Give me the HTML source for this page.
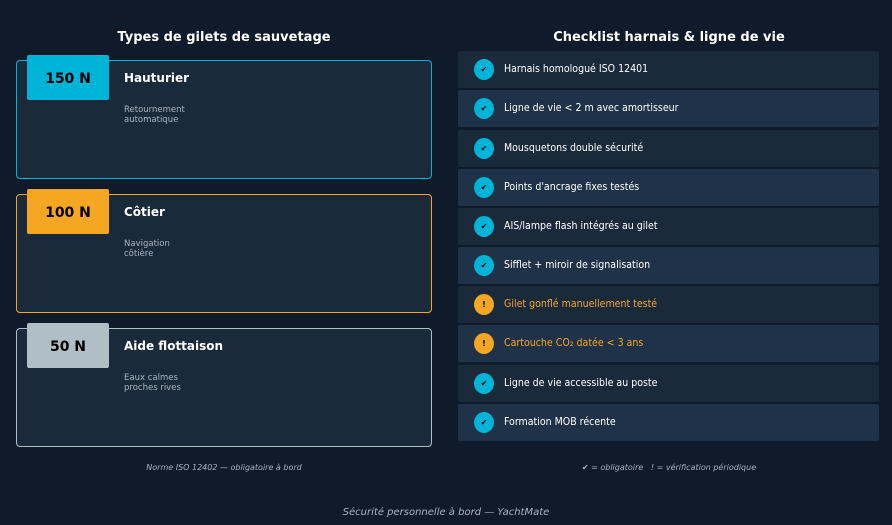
<!DOCTYPE html><html><head><style>
body{margin:0;width:892px;height:525px;background:#0f1a2a;font-family:"DejaVu Sans","Liberation Sans",sans-serif;position:relative;overflow:hidden}
h2{position:absolute;margin:0;font-size:13px;color:#fff;font-weight:bold;text-align:center}
.card{position:absolute;left:16px;width:414px;height:117px;border:1.5px solid;border-radius:4px;background:#1b2a3b}
.badge{position:absolute;left:27px;width:82px;height:45px;border-radius:2px;font-weight:bold;font-size:14px;line-height:48px;text-align:center;color:#000}
.t{position:absolute;left:124px;font-size:12px;font-weight:bold;color:#fff}
.d{position:absolute;left:124px;font-size:8.5px;color:#a9b4c0;line-height:10px}
.row{position:absolute;left:458px;width:421px;height:37px;border-radius:2px}
.ic{position:absolute;left:16px;top:8px;width:20px;height:21px;border-radius:50%;font-size:8px;line-height:21px;text-align:center;color:#000;font-weight:bold}
.rt{position:absolute;left:46px;top:0;line-height:37px;font-size:10.5px;color:#fff;font-stretch:condensed;font-family:"DejaVu Sans Condensed","DejaVu Sans",sans-serif}
.f{position:absolute;font-size:8px;font-style:italic;color:#a9b4c0;text-align:center}
</style></head><body>
<h2 style="left:0;width:448px;top:30px">Types de gilets de sauvetage</h2>
<h2 style="left:446px;width:446px;top:30px">Checklist harnais &amp; ligne de vie</h2>

<div class="card" style="top:60px;border-color:#00b4d8"></div>
<div class="badge" style="top:55px;background:#00b4d8">150 N</div>
<div class="t" style="top:71px">Hauturier</div>
<div class="d" style="top:105px">Retournement<br>automatique</div>

<div class="card" style="top:194px;border-color:#f5a623"></div>
<div class="badge" style="top:189px;background:#f5a623">100 N</div>
<div class="t" style="top:205px">Côtier</div>
<div class="d" style="top:239px">Navigation<br>côtière</div>

<div class="card" style="top:328px;border-color:#b0bec5"></div>
<div class="badge" style="top:323px;background:#b0bec5">50 N</div>
<div class="t" style="top:339px">Aide flottaison</div>
<div class="d" style="top:373px">Eaux calmes<br>proches rives</div>

<div class="f" style="left:0;width:448px;top:463px">Norme ISO 12402 — obligatoire à bord</div>

<div class="row" style="top:51px;background:#1b2a3b"><div class="ic" style="background:#00b4d8">✔</div><div class="rt">Harnais homologué ISO 12401</div></div>
<div class="row" style="top:90px;background:#1f3247"><div class="ic" style="background:#00b4d8">✔</div><div class="rt">Ligne de vie &lt; 2 m avec amortisseur</div></div>
<div class="row" style="top:130px;background:#1b2a3b"><div class="ic" style="background:#00b4d8">✔</div><div class="rt">Mousquetons double sécurité</div></div>
<div class="row" style="top:169px;background:#1f3247"><div class="ic" style="background:#00b4d8">✔</div><div class="rt">Points d'ancrage fixes testés</div></div>
<div class="row" style="top:208px;background:#1b2a3b"><div class="ic" style="background:#00b4d8">✔</div><div class="rt">AIS/lampe flash intégrés au gilet</div></div>
<div class="row" style="top:247px;background:#1f3247"><div class="ic" style="background:#00b4d8">✔</div><div class="rt">Sifflet + miroir de signalisation</div></div>
<div class="row" style="top:286px;background:#1b2a3b"><div class="ic" style="background:#f5a623">!</div><div class="rt" style="color:#f5a623">Gilet gonflé manuellement testé</div></div>
<div class="row" style="top:325px;background:#1f3247"><div class="ic" style="background:#f5a623">!</div><div class="rt" style="color:#f5a623">Cartouche CO₂ datée &lt; 3 ans</div></div>
<div class="row" style="top:365px;background:#1b2a3b"><div class="ic" style="background:#00b4d8">✔</div><div class="rt">Ligne de vie accessible au poste</div></div>
<div class="row" style="top:404px;background:#1f3247"><div class="ic" style="background:#00b4d8">✔</div><div class="rt">Formation MOB récente</div></div>

<div class="f" style="left:446px;width:446px;top:463px">✔ = obligatoire &nbsp; ! = vérification périodique</div>
<div class="f" style="left:0;width:892px;top:507px;font-size:10px">Sécurité personnelle à bord — YachtMate</div>
</body></html>
